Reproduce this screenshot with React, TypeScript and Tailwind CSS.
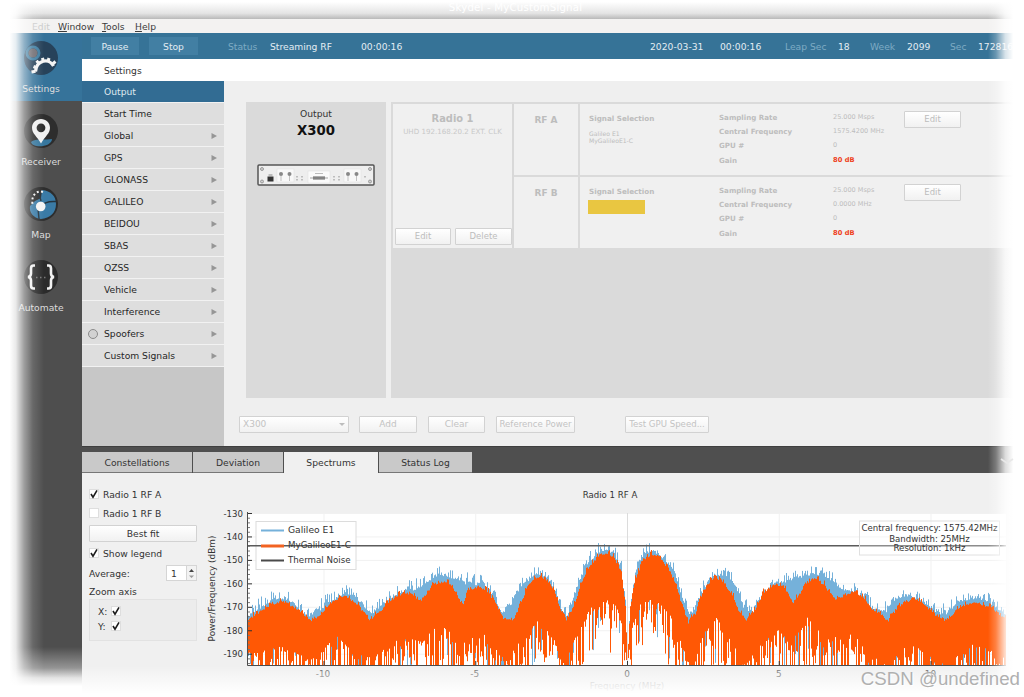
import type { ReactNode } from "react";
import clsx from "clsx";

const menuRows = [
  "Start Time",
  "Global",
  "GPS",
  "GLONASS",
  "GALILEO",
  "BEIDOU",
  "SBAS",
  "QZSS",
  "Vehicle",
  "Interference",
  "Spoofers",
  "Custom Signals",
];

const radios = [
  { name: "RF A", rate: "25.000 Msps", freq: "1575.4200 MHz", signals: ["Galileo E1", "MyGalileoE1-C"] },
  { name: "RF B", rate: "25.000 Msps", freq: "0.0000 MHz", signals: [] },
];

/* ---------- Spectrum data ---------- */

type Points = [number, number][];

const orangeTop: Points = [
  [247, 620], [258, 612], [270, 604], [283, 601], [295, 607], [310, 620], [320, 614], [333, 600], [345, 595],
  [358, 605], [369, 619], [380, 611], [390, 600], [403, 592], [412, 594], [420, 601], [426, 594], [432, 584], [443, 581],
  [452, 585], [457, 597], [463, 603], [468, 590], [478, 586], [488, 591], [495, 603], [503, 617], [513, 620],
  [520, 604], [527, 586], [535, 577], [545, 577], [553, 588], [560, 608], [566, 620], [573, 607], [580, 585],
  [587, 569], [597, 556], [605, 553], [614, 557], [621, 572], [625, 604], [627, 662], [630, 605], [635, 578],
  [643, 560], [650, 554], [660, 557], [668, 568], [675, 582], [682, 606], [688, 622], [695, 613], [702, 592],
  [710, 580], [715, 576], [722, 581], [732, 594], [738, 610], [746, 619], [755, 609], [763, 592], [775, 583],
  [783, 586], [788, 594], [793, 603], [800, 592], [806, 582], [815, 578], [823, 584], [836, 600], [845, 594],
  [853, 591], [862, 596], [873, 610], [888, 620], [897, 607], [906, 601], [913, 599], [922, 602], [932, 613],
  [945, 620], [957, 609], [966, 604], [977, 602], [990, 607], [1006, 619],
];

const blueTop: Points = [
  [247, 616], [260, 606], [272, 598], [283, 597], [292, 602], [305, 616], [318, 609], [333, 598], [345, 591], [356, 596],
  [370, 613], [383, 603], [395, 594], [405, 590], [420, 586], [432, 577], [443, 574], [455, 577], [466, 582],
  [480, 583], [492, 593], [500, 611], [507, 611], [515, 594], [525, 580], [537, 573], [545, 576], [553, 587],
  [560, 606], [567, 615], [578, 582], [587, 562], [597, 552], [605, 549], [614, 552], [621, 569], [625, 604],
  [627, 662], [630, 605], [637, 563], [645, 551], [655, 551], [665, 558], [675, 573], [683, 601], [690, 616],
  [700, 593], [713, 574], [724, 573], [735, 583], [743, 605], [752, 612], [763, 593], [775, 583], [790, 578],
  [805, 575], [815, 572], [825, 575], [840, 587], [853, 591], [865, 599], [873, 608], [887, 610], [897, 596],
  [910, 594], [920, 598], [932, 608], [945, 614], [957, 602], [970, 597], [985, 599], [1006, 613],
];

const floor: Points = [
  [247, 652], [283, 646], [310, 660], [336, 636], [365, 658], [385, 648], [403, 636], [422, 642], [440, 620], [460, 644],
  [480, 630], [505, 660], [520, 640], [537, 621], [552, 635], [564, 665], [578, 630], [590, 608], [605, 599],
  [616, 606], [623, 630], [627, 665], [632, 625], [640, 604], [655, 598], [670, 615], [680, 640], [690, 664],
  [702, 635], [716, 618], [730, 638], [745, 665], [760, 644], [776, 628], [792, 640], [808, 616], [825, 636],
  [853, 634], [872, 657], [890, 664], [908, 640], [925, 654], [945, 665], [975, 642], [1006, 659],
];

function sample(points: Points, x: number) {
  for (let i = 1; i < points.length; i++) {
    const [x1, y1] = points[i];
    if (x <= x1) {
      const [x0, y0] = points[i - 1];
      return y0 + ((y1 - y0) * (x - x0)) / (x1 - x0);
    }
  }
  return points[points.length - 1][1];
}

function buildSpectrum() {
  let seed = 1575;
  const rand = () => {
    seed = (seed * 16807) % 2147483647;
    return seed / 2147483647;
  };
  let orange = "";
  let blue = "";
  for (let x = 248; x < 1006; x++) {
    // the two main lobes have sparser nulls than the side lobes
    const sparse = Math.abs(x - 627) < 60 ? 2.6 : 1.7;
    const bTop = sample(blueTop, x) - Math.pow(rand(), 3) * 10 + rand() * 3;
    const oTop = sample(orangeTop, x) - Math.pow(rand(), 3) * 5 + rand() * 2;
    const base = sample(floor, x);
    const oBottom = Math.min(665, base + Math.pow(rand(), sparse) * 60);
    const bBottom = rand() > 0.82 ? Math.min(665, base + rand() * 45) : base;
    blue += `M${x + 0.5} ${bTop.toFixed(1)}V${bBottom.toFixed(1)}`;
    orange += `M${x + 0.5} ${oTop.toFixed(1)}V${Math.max(oBottom, oTop).toFixed(1)}`;
  }
  return { orange, blue };
}

const spectrum = buildSpectrum();

/* ---------- Small controls ---------- */

function Button({ className, children }: { className?: string; children: ReactNode }) {
  return (
    <div
      className={clsx(
        "flex h-[17px] shrink-0 items-center justify-center rounded-[1px] border border-[#d2d2d2] bg-linear-to-b from-white to-[#f1f1f1] whitespace-nowrap",
        className
      )}
    >
      {children}
    </div>
  );
}

function Check({ checked = true }: { checked?: boolean }) {
  return (
    <span className="flex size-[10px] shrink-0 items-center justify-center border border-[#dedede] bg-white">
      {checked && (
        <svg viewBox="0 0 10 10" className="size-[10px] shrink-0">
          <path d="M2 5l2 3.2L8 1.4" fill="none" stroke="#1c1c1c" strokeWidth="1.6" />
        </svg>
      )}
    </span>
  );
}

/* ---------- Sidebar ---------- */

function SettingsIcon() {
  return (
    <svg viewBox="0 0 34 34" className="size-[34px]">
      <circle cx="17" cy="17" r="17" fill="#27425a" />
      <circle cx="9" cy="12" r="6" fill="none" stroke="#3d7ca0" strokeWidth="3" />
      <circle cx="9" cy="12" r="4.500" fill="#6d6a70" />
      <path d="M11.500 30.500C12.500 19 25 16.500 29.500 25" fill="none" stroke="#f4f4f4" strokeWidth="3.200" />
      <path
        d="M9.500 25.500l3 1.300M12.500 19.800l2.500 2.700M18.500 16.800l.8 3.500M25 17l-1 3.500M31.500 20.500l-3 2.500M7.500 31l4-.8"
        stroke="#f4f4f4"
        strokeWidth="3"
      />
    </svg>
  );
}

function ReceiverIcon() {
  return (
    <svg viewBox="0 0 34 34" className="size-[34px]">
      <circle cx="17" cy="17" r="17" fill="#2d2d2d" />
      <path d="M7 28c2-2 6-2.500 10-2.500s8 0 11-.5c0 8-19 10-21 3z" fill="#37779e" />
      <path
        fillRule="evenodd"
        d="M17 5c-5 0-9 3.800-9 8.800 0 5.700 5 8.700 9 15.700 4-7 9-10 9-15.700 0-5-4-8.800-9-8.800zm0 4.400a4.400 4.400 0 1 1 0 8.800 4.400 4.400 0 0 1 0-8.800z"
        fill="#f1f1f1"
      />
    </svg>
  );
}

function MapIcon() {
  return (
    <svg viewBox="0 0 34 34" className="size-[34px]">
      <circle cx="17" cy="17" r="17" fill="#2d2d2d" />
      <path d="M18 3C27 4 32 9 32 17c0 9-6 14-15 15C9 31 5 25 6 19l5-5 6-3z" fill="#3a7ba6" />
      <path d="M17 20c2-4 6-6 15-5.500M14 22l1 10M17 14L15 6" stroke="#25343f" strokeWidth="1.400" fill="none" />
      <path d="M19 5C13 3 7 8 8.500 17" fill="none" stroke="#f1f1f1" strokeWidth="2" strokeDasharray="2 2.300" />
      <circle cx="16.700" cy="19.500" r="4.800" fill="#f4f4f4" />
    </svg>
  );
}

function AutomateIcon() {
  return (
    <svg viewBox="0 0 34 34" className="size-[34px]">
      <circle cx="17" cy="17" r="17" fill="#2b2b2b" />
      <path
        d="M11 5.500H9.500Q7 5.500 7 8.500v5q0 3-3 3.500q3 .5 3 3.500v5q0 3 2.500 3H11M23 5.500h1.500q2.500 0 2.500 3v5q0 3 3 3.500q-3 .5-3 3.500v5q0 3-2.500 3H23"
        fill="none"
        stroke="#f1f1f1"
        strokeWidth="2.600"
      />
      <path d="M12 17.500h11" stroke="#777" strokeWidth="1.300" strokeDasharray="1.500 2.500" />
    </svg>
  );
}

const sideItems = [
  { label: "Settings", icon: <SettingsIcon /> },
  { label: "Receiver", icon: <ReceiverIcon /> },
  { label: "Map", icon: <MapIcon /> },
  { label: "Automate", icon: <AutomateIcon /> },
];

function Sidebar() {
  return (
    <aside className="w-[82px] shrink-0 bg-[#4e4e4e] text-[#dcdcdc]">
      {sideItems.map((item, i) => (
        <div
          key={item.label}
          className={clsx(
            "flex flex-col items-center",
            i === 0 ? "h-[68px] bg-[#36739a] pt-2" : "h-[73px] pt-[13px]"
          )}
        >
          {item.icon}
          <span className="mt-[8px]">{item.label}</span>
        </div>
      ))}
    </aside>
  );
}

/* ---------- Toolbar ---------- */

function Toolbar() {
  return (
    <div className="flex h-[26px] shrink-0 items-center bg-[#367397] text-[#e3edf3]">
      <div className="ml-[9px] flex h-[18px] w-[48px] items-center justify-center bg-[#427fa3]">Pause</div>
      <div className="ml-[10px] flex h-[18px] w-[49px] items-center justify-center bg-[#427fa3]">Stop</div>
      <span className="ml-[30px] w-[42px] text-[#7eabc4]">Status</span>
      <span className="w-[91px]">Streaming RF</span>
      <span className="w-[289px]">00:00:16</span>
      <span className="w-[70px]">2020-03-31</span>
      <span className="w-[65px]">00:00:16</span>
      <span className="w-[53px] text-[#7eabc4]">Leap Sec</span>
      <span className="w-[32px]">18</span>
      <span className="w-[37px] text-[#7eabc4]">Week</span>
      <span className="w-[43px]">2099</span>
      <span className="w-[28px] text-[#7eabc4]">Sec</span>
      <span>172816</span>
    </div>
  );
}

function SettingsMenu() {
  return (
    <nav className="w-[142px] shrink-0 bg-[#c7c7c7] text-[#262626]">
      <div className="flex h-[22px] items-center border-b border-[#f2f2f2] bg-[#326c93] pl-[22px] text-[#dfe9ef]">
        Output
      </div>
      {menuRows.map((row, i) => (
        <div
          key={row}
          className={clsx(
            "flex h-[22px] items-center border-b border-[#f2f2f2] bg-[#dedede] pr-[7px]",
            row === "Spoofers" ? "pl-[6px]" : "pl-[22px]"
          )}
        >
          {row === "Spoofers" && (
            <span className="mr-[6px] size-[10px] rounded-full border border-[#8b8b8b] bg-[#d2d2d2]" />
          )}
          <span className="flex-1">{row}</span>
          {i > 0 && (
            <svg viewBox="0 0 6 6" className="size-[6px]">
              <path d="M0.500 0L6 3L0.500 6z" fill="#969696" />
            </svg>
          )}
        </div>
      ))}
    </nav>
  );
}

/* ---------- Output page ---------- */

function DeviceDrawing() {
  return (
    <svg viewBox="0 0 118 22" className="h-[22px] w-[118px]">
      <rect x="1" y="1" width="116" height="20" rx="1" fill="#eeeeee" stroke="#565656" strokeWidth="1.500" />
      {[5, 113].map((x) => (
        <g key={x} fill="#cfcfcf" stroke="#8a8a8a" strokeWidth="0.800">
          <circle cx={x} cy="5" r="1.500" />
          <circle cx={x} cy="17.500" r="1.500" />
        </g>
      ))}
      <path d="M10.500 12.500h6v5h-6z" fill="#333" />
      <path d="M11.500 11h4" stroke="#888" />
      {[20, 87].map((x) => (
        <g key={x}>
          <rect x={x} y="5" width="17" height="13" fill="#f8f8f8" stroke="#ddd" strokeWidth="0.500" />
          <circle cx={x + 4} cy="10" r="2" fill="#888" />
          <circle cx={x + 12.500} cy="10" r="2" fill="#888" />
          <path d={`M${x + 4} 12v5M${x + 12.500} 12v5`} stroke="#aaa" strokeWidth="0.700" />
        </g>
      ))}
      <rect x="51" y="7" width="22" height="12" fill="#fafafa" stroke="#ddd" strokeWidth="0.500" />
      <path d="M56 14h12" stroke="#626262" strokeWidth="3" />
      <path d="M53 14h18" stroke="#a5a5a5" strokeWidth="1" />
      <path d="M58 9.500h8" stroke="#bbb" />
      <path d="M40 12v5M45 12v5M77 12v5M82 12v5M108 12v3" stroke="#bdbdbd" strokeWidth="2" strokeDasharray="1.500 1.500" />
    </svg>
  );
}

function RfRow({ radio, last }: { radio: (typeof radios)[number]; last?: boolean }) {
  return (
    <div className={clsx("flex text-[#bdbdbd]", last ? "h-[71px]" : "h-[73px] border-b-2 border-[#dadada]")}>
      <div className="w-[66px] border-r-2 border-[#dadada] pt-[11px] text-center text-[9px] font-bold">
        {radio.name}
      </div>
      <div className={clsx("w-[139px] pl-[9px]", last ? "pt-[9px]" : "pt-[9px]")}>
        <div className="text-[7.200px] font-bold">Signal Selection</div>
        {radio.signals.length > 0 ? (
          <div className="mt-[6px] text-[6.100px] leading-[7px]">
            {radio.signals.map((s) => (
              <div key={s}>{s}</div>
            ))}
          </div>
        ) : (
          <div className="mt-[3px] -ml-px h-[14px] w-[57px] bg-[#e9c641]" />
        )}
      </div>
      <div
        className={clsx(
          "grid h-fit w-[185px] grid-cols-[114px_1fr] grid-rows-[14px_14px_14px_16px] items-center text-[6.500px] whitespace-nowrap",
          last ? "pt-[6px]" : "pt-[6px]"
        )}
      >
        <b className="text-[7.100px]">Sampling Rate</b>
        <span>{radio.rate}</span>
        <b className="text-[7.100px]">Central Frequency</b>
        <span>{radio.freq}</span>
        <b className="text-[7.100px]">GPU #</b>
        <span>0</span>
        <b className="text-[7.100px]">Gain</b>
        <b className="text-[6.700px] text-[#ee4020]">80 dB</b>
      </div>
      <Button className="mt-[7px] w-[57px] text-[8.500px]">Edit</Button>
    </div>
  );
}

function OutputPage() {
  return (
    <section className="min-w-0 flex-1 bg-[#efefef]">
      <div className="flex pt-[21px] pl-[22px]">
        <div className="flex h-[296px] w-[140px] shrink-0 flex-col items-center bg-[#dadada] pt-[6px] text-[#333]">
          <span>Output</span>
          <b className="mt-[4px] text-[13.300px] leading-[16px] text-[#111]">X300</b>
          <div className="mt-[25px]">
            <DeviceDrawing />
          </div>
        </div>
        <div className="ml-[5px] h-[296px] min-w-0 flex-1 bg-[#dadada] pt-[2px] pl-[2px]">
          <div className="flex h-[144px] bg-[#f0f0f0]">
            <div className="flex w-[121px] shrink-0 flex-col border-r-2 border-[#d8d8d8] text-[#bdbdbd]">
              <b className="mt-[9px] text-center text-[9.900px]">Radio 1</b>
              <span className="mt-[2px] text-center text-[7.100px] whitespace-nowrap text-[#c8c8c8]">
                UHD 192.168.20.2 EXT. CLK
              </span>
              <div className="mt-auto mb-[3px] flex gap-[4px] pl-[2px] text-[8.500px]">
                <Button className="w-[56px]">Edit</Button>
                <Button className="w-[57px]">Delete</Button>
              </div>
            </div>
            <div className="flex-1">
              <RfRow radio={radios[0]} />
              <RfRow radio={radios[1]} last />
            </div>
          </div>
        </div>
      </div>
      <div className="mt-[18px] flex pl-[15px] text-[9px] text-[#c3c3c3]">
        <Button className="w-[110px] justify-between! px-[3px]">
          X300
          <svg viewBox="0 0 6 3" className="h-[3px] w-[6px]">
            <path d="M0 0h6L3 3z" fill="#bdbdbd" />
          </svg>
        </Button>
        <Button className="ml-[10px] w-[58px]">Add</Button>
        <Button className="ml-[11px] w-[57px]">Clear</Button>
        <Button className="ml-[11px] w-[79px] text-[8.600px]">Reference Power</Button>
        <Button className="ml-[50px] w-[84px] text-[8.600px]">Test GPU Speed...</Button>
      </div>
    </section>
  );
}

/* ---------- Bottom panel ---------- */

function TabBar() {
  return (
    <div className="flex h-[27px] shrink-0 items-end border-t border-[#3f3f3f] bg-[#4f4f4f] text-[#333]">
      <div className="flex h-[21px] w-[110px] items-center justify-center border-b border-[#777] bg-[#c9c9c9]">
        Constellations
      </div>
      <div className="ml-px flex h-[21px] w-[90px] items-center justify-center border-b border-[#777] bg-[#c9c9c9]">
        Deviation
      </div>
      <div className="ml-px flex h-[21px] w-[94px] items-center justify-center bg-[#f0f0f0]">Spectrums</div>
      <div className="ml-px flex h-[21px] w-[93px] items-center justify-center border-b border-[#777] bg-[#c9c9c9]">
        Status Log
      </div>
    </div>
  );
}

function SpectrumOptions() {
  return (
    <div className="flex w-[115px] shrink-0 flex-col pt-[15px] pl-[7px] text-[#333]">
      <label className="flex h-[12px] items-center gap-[4px]">
        <Check /> Radio 1 RF A
      </label>
      <label className="mt-[7px] flex h-[12px] items-center gap-[4px]">
        <Check checked={false} /> Radio 1 RF B
      </label>
      <Button className="mt-[6px]">Best fit</Button>
      <label className="mt-[5px] flex h-[12px] items-center gap-[4px]">
        <Check /> Show legend
      </label>
      <div className="mt-[6px] flex h-[16px] items-center justify-between">
        Average:
        <div className="flex h-[16px] w-[31px] items-center border border-[#d5d5d5] bg-white">
          <span className="flex-1 pl-[4px]">1</span>
          <span className="flex h-full w-[10px] items-center justify-center border-l border-[#d5d5d5] bg-[#f2f2f2]">
            <svg viewBox="0 0 5 9" className="h-[9px] w-[5px]">
              <path d="M2.500 0L5 3H0z" fill="#444" />
              <path d="M2.500 9L5 6.500H0z" fill="#999" />
            </svg>
          </span>
        </div>
      </div>
      <span className="mt-[5px]">Zoom axis</span>
      <div className="mt-[2px] flex h-[42px] flex-col gap-[5px] border border-[#e2e2e2] bg-[#ececec] pt-[6px] pl-[8px]">
        <span className="flex h-[10px] items-center gap-[5px]">
          <span className="w-[8px]">X:</span>
          <Check />
        </span>
        <span className="flex h-[10px] items-center gap-[5px]">
          <span className="w-[8px]">Y:</span>
          <Check />
        </span>
      </div>
    </div>
  );
}

const yTicks = [-130, -140, -150, -160, -170, -180, -190];
const xTicks = [-10, -5, 0, 5, 10];

function SpectrumChart() {
  return (
    <svg viewBox="197 473 827 224" width="827" height="224" fontSize="9.2" fill="#333" className="shrink-0">
      <rect x="247" y="513" width="759" height="152.500" fill="#fff" />
      {yTicks.map((t, i) => (
        <path key={t} d={`M248 ${513.5 + i * 23.45}H1006`} stroke="#f1f1f1" />
      ))}
      {xTicks.map((t) => (
        <path key={t} d={`M${627.5 + t * 30.35} 513V665`} stroke={t === 0 ? "#dcdcdc" : "#f1f1f1"} />
      ))}
      <path d={spectrum.blue} stroke="#75b1da" />
      <path d={spectrum.orange} stroke="#ff5805" />

      {/* Legend */}
      <rect x="256" y="521.500" width="100" height="48" fill="#fff" stroke="#dcdcdc" />
      <path d="M247 545.800H1006" stroke="#5b5b5b" strokeWidth="1.400" />
      <path d="M261 530.500h23" stroke="#75b1da" strokeWidth="2" />
      <path d="M261 546h23" stroke="#f26322" strokeWidth="3" />
      <path d="M261 560.500h23" stroke="#4a4a4a" strokeWidth="2" />
      <text x="288" y="533.300">Galileo E1</text>
      <text x="288" y="548.300" fontSize="8.7">MyGalileoE1-C</text>
      <text x="288" y="563" fontSize="8.7">Thermal Noise</text>

      {/* Signal info */}
      <rect x="859.500" y="521" width="140" height="34" fill="#fff" fillOpacity="0.300" stroke="#e0e0e0" />
      <g textAnchor="middle" fontSize="8.600">
        <text x="929.500" y="531.300">Central frequency: 1575.42MHz</text>
        <text x="929.500" y="541.500">Bandwidth: 25MHz</text>
        <text x="929.500" y="551.300">Resolution: 1kHz</text>
      </g>

      {/* Axes */}
      <path d="M247.500 512V665.500H1006" fill="none" stroke="#4c4c4c" />
      {yTicks.map((t, i) => (
        <g key={t}>
          <path d={`M248 ${513.5 + i * 23.45}h4`} stroke="#333" />
          {[1, 2, 3, 4].map((m) => (
            <path key={m} d={`M248 ${513.5 + i * 23.45 + m * 4.69}h2`} stroke="#777" opacity={i === 6 && m > 2 ? 0 : 1} />
          ))}
          <text x="243" y={516.500 + i * 23.45} textAnchor="end" fontSize="8.600">
            {t}
          </text>
        </g>
      ))}
      {xTicks.map((t) => (
        <g key={t}>
          <path d={`M${627.5 + t * 30.35} 665v-4`} stroke="#333" />
          <text x={(t < 0 ? 626.500 : 627) + t * 30.35} y="676.500" textAnchor="middle" fill="#666" fontSize="8.900">
            {t}
          </text>
        </g>
      ))}
      <text transform="translate(214.500 588.500) rotate(-90)" textAnchor="middle" fontSize="8.900">
        Power/Frequency (dBm)
      </text>
      <text x="610" y="498" textAnchor="middle" fontSize="8.600">
        Radio 1 RF A
      </text>
      <text x="627" y="688.500" textAnchor="middle" fill="#b4b4b4" fontSize="8.900">
        Frequency (MHz)
      </text>
    </svg>
  );
}

export default function App() {
  return (
    <div className="relative flex h-[697px] w-[1024px] flex-col overflow-hidden bg-white font-['DejaVu_Sans',sans-serif] text-[9.200px] leading-[11px]">
      <header className="h-[19px] shrink-0 bg-linear-to-b from-white from-10% via-[#e4e4e4] via-70% to-[#b9b9b9] pt-[2px] pl-[7px] text-center text-[10.200px] tracking-[0.200px] text-white">
        Skydel - MyCustomSignal
      </header>
      <div className="flex h-[14px] shrink-0 items-center bg-[#f3f2f1] pl-[32px] text-[#3c3c3c]">
        <span className="w-[26px] text-[#ccc]">Edit</span>
        <span className="w-[44px]"><u>W</u>indow</span>
        <span className="w-[33px]"><u>T</u>ools</span>
        <span><u>H</u>elp</span>
      </div>

      <div className="flex min-h-0 flex-1">
        <Sidebar />
        <main className="flex min-w-0 flex-1 flex-col">
          <Toolbar />
          <div className="flex h-[22px] shrink-0 items-center bg-white pl-[22px] text-[#333]">Settings</div>
          <div className="flex h-[365px] shrink-0">
            <SettingsMenu />
            <OutputPage />
          </div>
          <TabBar />
          <div className="flex min-h-0 flex-1 bg-[#f0f0f0]">
            <SpectrumOptions />
            <SpectrumChart />
          </div>
        </main>
      </div>

      {/* Soft white edges around the window */}
      <div className="absolute inset-y-0 left-0 w-[44px] bg-[linear-gradient(to_right,#fff_22%,rgba(255,255,255,.88)_36%,rgba(255,255,255,.45)_55%,rgba(255,255,255,.15)_75%,transparent)]" />
      <div className="absolute inset-y-0 right-0 w-[36px] bg-[linear-gradient(to_left,#fff_30%,rgba(255,255,255,.8)_52%,rgba(255,255,255,.25)_78%,transparent)]" />
      <div className="absolute bottom-0 left-0 h-[50px] w-[82px] bg-[linear-gradient(to_top,#fff_22%,rgba(255,255,255,.85)_38%,rgba(255,255,255,.4)_58%,transparent)]" />
      <div className="absolute right-0 bottom-0 left-[82px] h-[31px] bg-[linear-gradient(to_top,#fff_10%,rgba(255,255,255,.4)_65%,transparent)]" />
      <svg viewBox="0 0 14 6" className="absolute top-[458px] left-[1000px] h-[6px] w-[14px]">
        <path d="M1 1l6 4l6-4" fill="none" stroke="#e8e8e8" strokeWidth="1.800" />
      </svg>
      <div className="absolute right-[4px] bottom-[7px] font-['Liberation_Sans',sans-serif] text-[18.700px] leading-[22px] whitespace-nowrap text-[#b0b0b0] [text-shadow:1px_1px_1px_#fff]">
        CSDN @undefined
      </div>
    </div>
  );
}
